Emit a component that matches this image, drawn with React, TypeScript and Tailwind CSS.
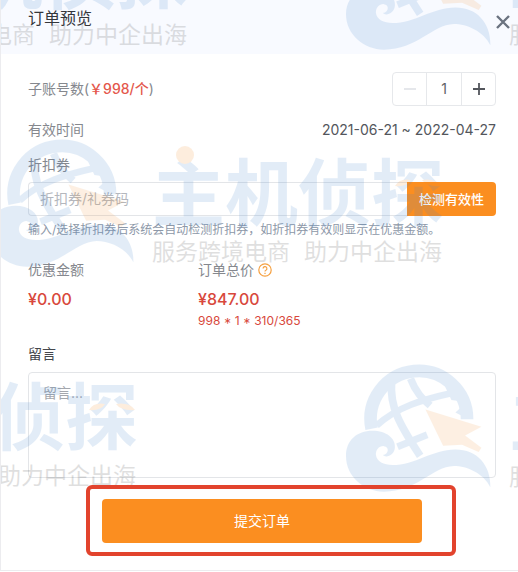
import { useState } from "react";

const UNIT_PRICE = 998;
const DAYS_LEFT = 310;

// x/y of every stamp on the free canvas over the dialog
const stamps = [
  "left-[-267px] top-[-77px]",
  "left-[345px] top-[-77px]",
  "left-[-12px] top-[140px]",
  "left-[-318px] top-[364px]",
  "left-[345px] top-[365px]",
];

function WaveLogo() {
  return (
    <svg viewBox="76 45 436 380" className="w-[145px] h-[127px] shrink-0 overflow-visible" fill="none">
      <g stroke="#4487d0">
        <path d="M153 236 A145 145 0 1 1 440 207" strokeWidth="38" />
        <path d="M213 95 C207 170 238 225 299 317" strokeWidth="23" />
        <path d="M270 85 C285 125 305 145 329 166" strokeWidth="22" />
        <path d="M168 226 C230 170 305 148 395 128" strokeWidth="20" />
        <path d="M231 290 L320 254" strokeWidth="21" />
      </g>
      <path d="M372 105 L410 105 L445 160 L440 205 L405 187 L418 175 L415 152 L393 149 Z" fill="#4487d0" />
      <path d="M315 178 L483 230 L434 256 L483 293 L475 306 L425 284 L368 287 Z" fill="#f29b44" />
      <path
        d="M76 318 C76 270 110 242 155 242 C198 242 225 265 223 292 C222 315 197 325 187 315 C205 312 207 289 190 288 C175 287 165 300 166 315 C168 335 190 345 215 345 C285 345 335 298 405 298 C470 298 512 345 510 412 C490 370 440 348 400 348 C335 350 290 425 190 425 C130 425 76 380 76 318 Z"
        fill="#4487d0"
      />
    </svg>
  );
}

function Stamp({ place }: { place: string }) {
  return (
    <div className={`absolute flex items-start ${place}`}>
      <WaveLogo />
      <div className="relative ml-[18px] pt-[18px] whitespace-nowrap">
        <p className="text-[73px] leading-[72px] font-bold text-[#4487d0]">主机侦探</p>
        <p className="mt-2 flex gap-[14px] text-[23px] leading-7 text-[#303030]">
          <span>服务跨境电商</span>
          <span>助力中企出海</span>
        </p>
        <svg viewBox="0 0 290 50" className="absolute left-0 top-0 w-[290px] h-[50px]" fill="#f28a24">
          <circle cx="33" cy="15" r="9" />
          <path d="M243 46 Q248 38 259 40 Q255 47 243 46 Z" />
          <path d="M289 46 Q283 38 270 40 Q275 47 289 46 Z" />
        </svg>
      </div>
    </div>
  );
}

function Watermark() {
  return (
    <div aria-hidden="true" className="absolute inset-0 overflow-hidden pointer-events-none opacity-15">
      {stamps.map((place) => (
        <Stamp key={place} place={place} />
      ))}
    </div>
  );
}

export default function App() {
  const [count, setCount] = useState(1);
  const [coupon, setCoupon] = useState("");
  const [message, setMessage] = useState("");

  const total = Math.floor((UNIT_PRICE * count * DAYS_LEFT) / 365);

  return (
    <div className="relative isolate overflow-hidden bg-white border-l border-b border-[#ececef] font-[Inter,'Noto_Sans_CJK_SC',sans-serif] text-sm leading-5 text-[#85888e]">
      <header className="h-[54px] pl-[27px] pr-[7px] pt-[6px] flex items-start justify-between bg-[#f8faff]">
        <h1 className="text-base leading-6 text-[#35373b]">订单预览</h1>
        <button aria-label="关闭" className="mt-2 text-[#6b7380]">
          <svg viewBox="0 0 16 16" className="w-4 h-4" stroke="currentColor" strokeWidth="2.4" fill="none">
            <path d="M2 2 L14 14 M14 2 L2 14" />
          </svg>
        </button>
      </header>

      <main className="pl-[27px] pr-[22px] pt-[18px] pb-[14px]">
        <div className="flex items-center justify-between">
          <label htmlFor="count">
            子账号数(<span className="font-medium text-[#e4574c]">￥{UNIT_PRICE}/个</span>)
          </label>
          <div className="flex h-[34px] w-[104px] border border-[#e6e8eb] rounded">
            <button
              aria-label="减少"
              disabled={count <= 1}
              onClick={() => setCount(count - 1)}
              className="flex-1 flex items-center justify-center text-[#53565c] disabled:text-[#dcdfe4]"
            >
              <svg viewBox="0 0 14 14" className="w-[14px] h-[14px]" stroke="currentColor" strokeWidth="1.5">
                <path d="M1 7 H13" />
              </svg>
            </button>
            <input
              id="count"
              value={count}
              onChange={(e) => setCount(Math.max(1, Number(e.target.value) || 1))}
              className="w-9 border-x border-[#e6e8eb] text-center text-[#606266] outline-none"
            />
            <button
              aria-label="增加"
              onClick={() => setCount(count + 1)}
              className="flex-1 flex items-center justify-center text-[#53565c]"
            >
              <svg viewBox="0 0 14 14" className="w-[14px] h-[14px]" stroke="currentColor" strokeWidth="1.8">
                <path d="M1 7 H13 M7 1 V13" />
              </svg>
            </button>
          </div>
        </div>

        <div className="mt-[14px] flex items-center justify-between">
          <span>有效时间</span>
          <span className="text-[#53565c]">2021-06-21 ~ 2022-04-27</span>
        </div>

        <label htmlFor="coupon" className="block mt-[15px]">折扣券</label>
        <div className="mt-[7px] flex h-[34px]">
          <input
            id="coupon"
            value={coupon}
            onChange={(e) => setCoupon(e.target.value)}
            placeholder="折扣券/礼券码"
            className="flex-1 min-w-0 px-[11px] border border-r-0 border-[#e3e5e8] rounded-l outline-none placeholder:text-[#b4b7bd]"
          />
          <button className="w-[89px] rounded-r bg-[#fb8e20] text-[13px] font-medium text-white">检测有效性</button>
        </div>
        <p className="mt-1 text-xs leading-5 text-[#8d98a8]">
          输入/选择折扣券后系统会自动检测折扣券，如折扣券有效则显示在优惠金额。
        </p>

        <div className="mt-5 flex">
          <div className="w-[170px]">
            <p>优惠金额</p>
            <p className="mt-[9px] text-base leading-5 font-medium text-[#d8483c]">¥0.00</p>
          </div>
          <div>
            <p className="flex items-center gap-1">
              订单总价
              <svg viewBox="0 0 14 14" className="w-[14px] h-[14px]" fill="none" stroke="#f5a040" strokeWidth="1.2">
                <circle cx="7" cy="7" r="6.2" />
                <path d="M5.1 5.6 A1.9 1.9 0 1 1 7.9 7.2 Q7 7.6 7 8.5 M7 9.7 V10.9" />
              </svg>
            </p>
            <p className="mt-[9px] text-base leading-5 font-medium text-[#d8483c]">¥{total.toFixed(2)}</p>
            <p className="mt-1 text-xs leading-4 text-[#d8483c]">
              {UNIT_PRICE} * {count} * {DAYS_LEFT}/365
            </p>
          </div>
        </div>

        <label htmlFor="message" className="block mt-[15px] text-[#45474c]">留言</label>
        <textarea
          id="message"
          value={message}
          onChange={(e) => setMessage(e.target.value)}
          placeholder="留言..."
          className="block mt-2 w-full h-[106px] px-[14px] py-[10px] border border-[#e3e5e8] rounded resize-none outline-none placeholder:text-[#a4a7ad]"
        />

        <div className="relative z-10 mt-[7px] ml-[58px] mr-10 border-4 border-[#e2432d] rounded-md pl-3 pr-[30px] pt-[10px] pb-[9px]">
          <button className="block w-full h-11 rounded bg-[#fb8e20] text-white">提交订单</button>
        </div>
      </main>

      <Watermark />
    </div>
  );
}
